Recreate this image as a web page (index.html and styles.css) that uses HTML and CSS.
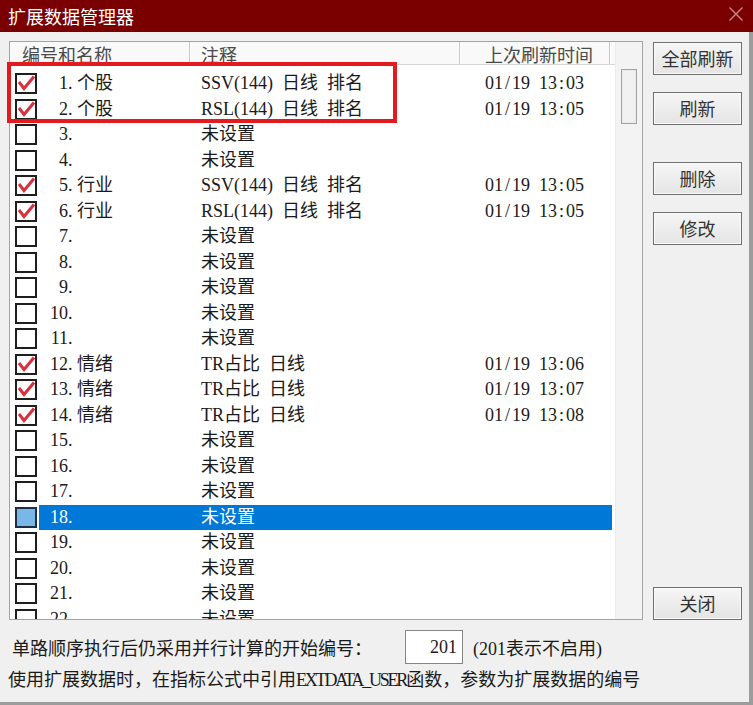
FILE: index.html
```html
<!DOCTYPE html>
<html lang="zh-CN">
<head>
<meta charset="utf-8">
<title>扩展数据管理器</title>
<link rel="stylesheet" href="styles.css">
</head>
<body>
<div class="dialog">
  <div class="titlebar">
    <span class="title">扩展数据管理器</span>
    <svg class="close" width="14" height="14" viewBox="0 0 14 14"><path d="M0.5 0.5 L13.5 13.5 M13.5 0.5 L0.5 13.5" stroke="#c48b8b" stroke-width="1.4" fill="none"/></svg>
  </div>
  <div class="content">
    <div class="main">
      <div class="listbox">
        <div class="listarea">
          <div class="header">
            <div class="hcol h1">编号和名称</div>
            <div class="hcol h2">注释</div>
            <div class="hcol h3">上次刷新时间</div>
          </div>
          <div class="rows">
            <div class="row"><span class="cb on"><svg width="18" height="17" viewBox="0 0 18 17"><path d="M2 7 L7 13.5 L17 1.5" stroke="#d9303e" stroke-width="3" fill="none"/></svg></span><div class="cells"><span class="c1"><span class="num">1<span class="dot">.</span></span>个股</span><span class="c2">SSV(144)&ensp;日线&ensp;排名</span><span class="c3">01<span class="h">/</span>19&ensp;13<span class="h">:</span>03</span></div></div>
            <div class="row"><span class="cb on"><svg width="18" height="17" viewBox="0 0 18 17"><path d="M2 7 L7 13.5 L17 1.5" stroke="#d9303e" stroke-width="3" fill="none"/></svg></span><div class="cells"><span class="c1"><span class="num">2<span class="dot">.</span></span>个股</span><span class="c2">RSL(144)&ensp;日线&ensp;排名</span><span class="c3">01<span class="h">/</span>19&ensp;13<span class="h">:</span>05</span></div></div>
            <div class="row"><span class="cb"></span><div class="cells"><span class="c1"><span class="num">3<span class="dot">.</span></span></span><span class="c2">未设置</span><span class="c3"></span></div></div>
            <div class="row"><span class="cb"></span><div class="cells"><span class="c1"><span class="num">4<span class="dot">.</span></span></span><span class="c2">未设置</span><span class="c3"></span></div></div>
            <div class="row"><span class="cb on"><svg width="18" height="17" viewBox="0 0 18 17"><path d="M2 7 L7 13.5 L17 1.5" stroke="#d9303e" stroke-width="3" fill="none"/></svg></span><div class="cells"><span class="c1"><span class="num">5<span class="dot">.</span></span>行业</span><span class="c2">SSV(144)&ensp;日线&ensp;排名</span><span class="c3">01<span class="h">/</span>19&ensp;13<span class="h">:</span>05</span></div></div>
            <div class="row"><span class="cb on"><svg width="18" height="17" viewBox="0 0 18 17"><path d="M2 7 L7 13.5 L17 1.5" stroke="#d9303e" stroke-width="3" fill="none"/></svg></span><div class="cells"><span class="c1"><span class="num">6<span class="dot">.</span></span>行业</span><span class="c2">RSL(144)&ensp;日线&ensp;排名</span><span class="c3">01<span class="h">/</span>19&ensp;13<span class="h">:</span>05</span></div></div>
            <div class="row"><span class="cb"></span><div class="cells"><span class="c1"><span class="num">7<span class="dot">.</span></span></span><span class="c2">未设置</span><span class="c3"></span></div></div>
            <div class="row"><span class="cb"></span><div class="cells"><span class="c1"><span class="num">8<span class="dot">.</span></span></span><span class="c2">未设置</span><span class="c3"></span></div></div>
            <div class="row"><span class="cb"></span><div class="cells"><span class="c1"><span class="num">9<span class="dot">.</span></span></span><span class="c2">未设置</span><span class="c3"></span></div></div>
            <div class="row"><span class="cb"></span><div class="cells"><span class="c1"><span class="num">10<span class="dot">.</span></span></span><span class="c2">未设置</span><span class="c3"></span></div></div>
            <div class="row"><span class="cb"></span><div class="cells"><span class="c1"><span class="num">11<span class="dot">.</span></span></span><span class="c2">未设置</span><span class="c3"></span></div></div>
            <div class="row"><span class="cb on"><svg width="18" height="17" viewBox="0 0 18 17"><path d="M2 7 L7 13.5 L17 1.5" stroke="#d9303e" stroke-width="3" fill="none"/></svg></span><div class="cells"><span class="c1"><span class="num">12<span class="dot">.</span></span>情绪</span><span class="c2">TR占比&ensp;日线</span><span class="c3">01<span class="h">/</span>19&ensp;13<span class="h">:</span>06</span></div></div>
            <div class="row"><span class="cb on"><svg width="18" height="17" viewBox="0 0 18 17"><path d="M2 7 L7 13.5 L17 1.5" stroke="#d9303e" stroke-width="3" fill="none"/></svg></span><div class="cells"><span class="c1"><span class="num">13<span class="dot">.</span></span>情绪</span><span class="c2">TR占比&ensp;日线</span><span class="c3">01<span class="h">/</span>19&ensp;13<span class="h">:</span>07</span></div></div>
            <div class="row"><span class="cb on"><svg width="18" height="17" viewBox="0 0 18 17"><path d="M2 7 L7 13.5 L17 1.5" stroke="#d9303e" stroke-width="3" fill="none"/></svg></span><div class="cells"><span class="c1"><span class="num">14<span class="dot">.</span></span>情绪</span><span class="c2">TR占比&ensp;日线</span><span class="c3">01<span class="h">/</span>19&ensp;13<span class="h">:</span>08</span></div></div>
            <div class="row"><span class="cb"></span><div class="cells"><span class="c1"><span class="num">15<span class="dot">.</span></span></span><span class="c2">未设置</span><span class="c3"></span></div></div>
            <div class="row"><span class="cb"></span><div class="cells"><span class="c1"><span class="num">16<span class="dot">.</span></span></span><span class="c2">未设置</span><span class="c3"></span></div></div>
            <div class="row"><span class="cb"></span><div class="cells"><span class="c1"><span class="num">17<span class="dot">.</span></span></span><span class="c2">未设置</span><span class="c3"></span></div></div>
            <div class="row selected"><span class="cb"></span><div class="cells"><span class="c1"><span class="num">18<span class="dot">.</span></span></span><span class="c2">未设置</span><span class="c3"></span></div></div>
            <div class="row"><span class="cb"></span><div class="cells"><span class="c1"><span class="num">19<span class="dot">.</span></span></span><span class="c2">未设置</span><span class="c3"></span></div></div>
            <div class="row"><span class="cb"></span><div class="cells"><span class="c1"><span class="num">20<span class="dot">.</span></span></span><span class="c2">未设置</span><span class="c3"></span></div></div>
            <div class="row"><span class="cb"></span><div class="cells"><span class="c1"><span class="num">21<span class="dot">.</span></span></span><span class="c2">未设置</span><span class="c3"></span></div></div>
            <div class="row"><span class="cb"></span><div class="cells"><span class="c1"><span class="num">22<span class="dot">.</span></span></span><span class="c2">未设置</span><span class="c3"></span></div></div>
          </div>
        </div>
        <div class="scrollbar"><div class="thumb"></div></div>
      </div>
      <div class="buttons">
        <button class="btn b1">全部刷新</button>
        <button class="btn b2">刷新</button>
        <button class="btn b3">删除</button>
        <button class="btn b4">修改</button>
        <button class="btn b5">关闭</button>
      </div>
    </div>
    <div class="optrow">
      <span class="label">单路顺序执行后仍采用并行计算的开始编号：</span>
      <span class="input">201</span>
      <span class="hint">(201表示不启用)</span>
    </div>
    <div class="note">使用扩展数据时，在指标公式中引用<span class="latin">EXTDATA_USER</span>函数，参数为扩展数据的编号</div>
  </div>
  <div class="annot"></div>
</div>
</body>
</html>
```
FILE: styles.css
```css
* { box-sizing: border-box; }
html, body { margin: 0; padding: 0; }
body {
  width: 753px;
  height: 705px;
  overflow: hidden;
  background: #f0f0f0;
  font-family: "Liberation Serif", "Noto Sans CJK SC", serif;
  font-size: 18px;
  color: #1a1a1a;
}
.dialog {
  position: relative;
  width: 753px;
  height: 705px;
  display: flex;
  flex-direction: column;
}
.titlebar {
  height: 32px;
  flex: none;
  background: #7a0000;
  color: #ffffff;
  display: flex;
  align-items: center;
  justify-content: space-between;
  padding: 0 10px 0 8px;
}
.title { line-height: 32px; font-family: "Noto Sans CJK SC", sans-serif; }
.close { margin-top: -4px; }
.content {
  flex: 1;
  border-right: 4px solid #9c9c9c;
  border-bottom: 3px solid #9c9c9c;
  display: flex;
  flex-direction: column;
}
.main {
  display: flex;
  padding: 9px 0 0 9px;
}
.listbox {
  width: 634px;
  height: 579px;
  border: 1px solid #a3a3a3;
  background: #ffffff;
  display: flex;
}
.listarea {
  width: 605px;
  display: flex;
  flex-direction: column;
}
.header {
  height: 23px;
  flex: none;
  display: flex;
  background: #f9f9f9;
  border-bottom: 1px solid #d6d6d6;
  color: #4a4a4a;
  font-family: "Noto Sans CJK SC", sans-serif;
}
.hcol {
  height: 22px;
  line-height: 24px;
  border-right: 1px solid #c9c9c9;
  box-shadow: 1px 0 0 #ffffff;
  white-space: nowrap;
}
.h1 { width: 180px; padding-left: 12px; }
.h2 { width: 270px; padding-left: 11px; }
.h3 { width: 150px; padding-left: 25px; }
.rows {
  flex: 1;
  min-height: 0;
  overflow: hidden;
  padding-top: 6px;
}
.row {
  height: 25.5px;
  display: flex;
  align-items: center;
  padding-right: 3px;
}
.cb {
  flex: none;
  width: 22px;
  height: 21px;
  margin-left: 5px;
  margin-right: 2px;
  border: 2px solid #1e1e1e;
  background: #ffffff;
  display: flex;
  align-items: center;
  justify-content: center;
}
.cb svg { display: block; }
.cells {
  flex: 1;
  height: 25px;
  display: flex;
  align-items: center;
  line-height: 25px;
  white-space: nowrap;
}
.c1 { width: 162px; display: flex; }
.num { width: 38px; text-align: right; }
.dot { display: inline-block; width: 9px; text-align: left; }
.c2 { width: 284px; }
.c3 { flex: 1; }
.h { display: inline-block; width: 9px; text-align: center; }
.row.selected .cells { background: #0078d7; color: #ffffff; }
.row.selected .cb { background: #7ab7e7; border-color: #1d2f45; }
.scrollbar {
  flex: 1;
  background: #f3f3f3;
  border-left: 1px solid #ececec;
  padding: 27px 0 0 5px;
}
.thumb {
  width: 16px;
  height: 55px;
  border: 1px solid #a2a2a2;
  box-shadow: inset 0 0 0 1px #e8e8e8;
  background: #f1f1f1;
}
.buttons {
  width: 89px;
  height: 579px;
  margin-left: 10px;
  padding-top: 1px;
  display: flex;
  flex-direction: column;
}
.btn {
  width: 89px;
  height: 33px;
  border: 1px solid #6f6f6f;
  box-shadow: inset 0 0 0 1px #fafafa;
  background: linear-gradient(#f6f6f6, #e4e4e4);
  font-family: "Noto Sans CJK SC", sans-serif;
  font-size: 18px;
  color: #333333;
  padding: 0;
  line-height: 31px;
}
.b2 { margin-top: 17px; }
.b3 { margin-top: 37px; }
.b4 { margin-top: 17px; }
.b5 { margin-top: auto; }
.optrow {
  display: flex;
  align-items: center;
  margin-top: 10px;
  height: 34px;
  padding-left: 12px;
}
.label { width: 360px; }
.input {
  margin-left: 33px;
  width: 58px;
  height: 34px;
  border: 1px solid #858585;
  background: #ffffff;
  text-align: right;
  padding-right: 5px;
  line-height: 32px;
}
.hint { margin-left: 10px; }
.note {
  margin-top: 4px;
  padding-left: 8px;
  line-height: 24px;
  white-space: nowrap;
}
.latin { letter-spacing: -2.2px; }
.annot {
  position: absolute;
  left: 7px;
  top: 62px;
  width: 390px;
  height: 61px;
  border: 4px solid #e31b1f;
}
```
